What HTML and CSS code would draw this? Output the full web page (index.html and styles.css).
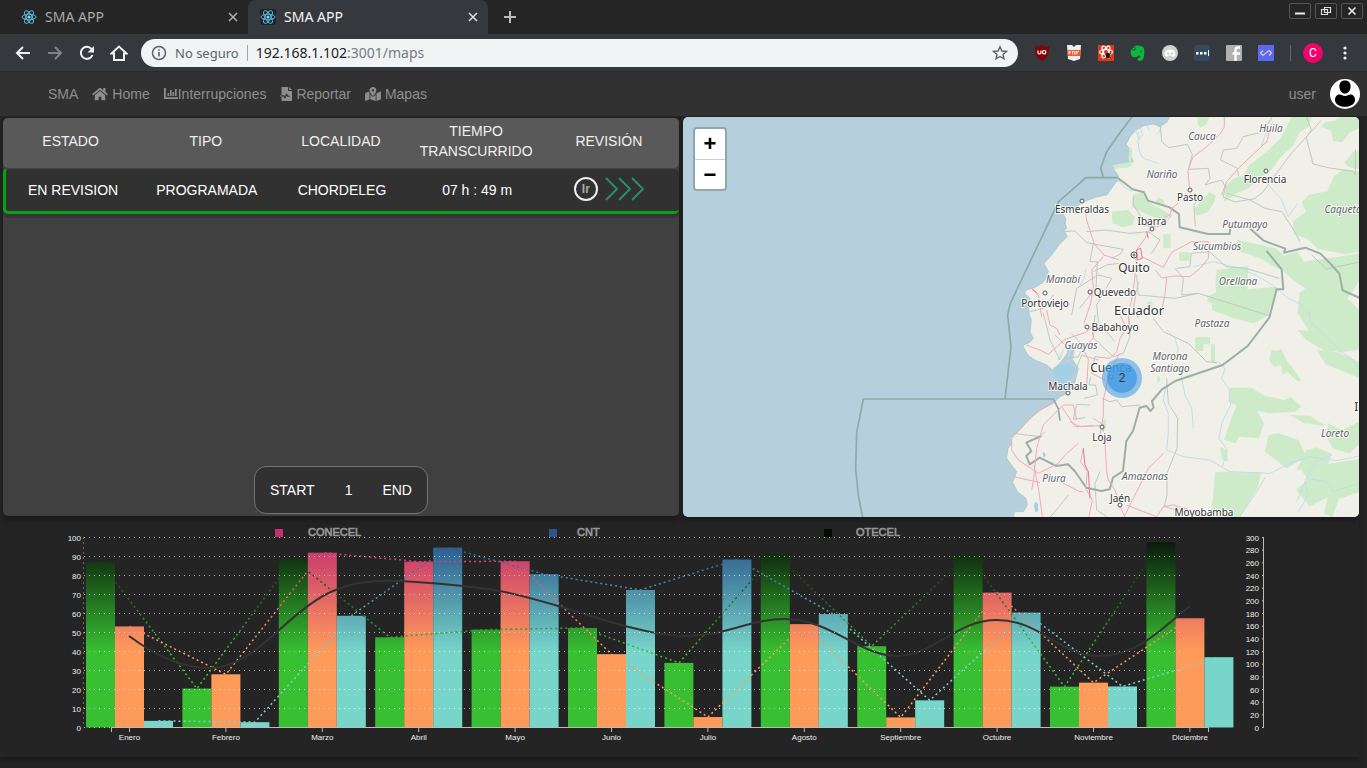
FILE: index.html
```html
<!DOCTYPE html>
<html lang="es">
<head>
<meta charset="utf-8">
<title>SMA APP</title>
<link rel="stylesheet" href="styles.css">
</head>
<body>
<svg class="defs" aria-hidden="true">
  <symbol id="react" viewBox="0 0 24 24">
    <g fill="none" stroke="#57b9d8" stroke-width="1.500">
      <ellipse cx="12" cy="12" rx="10.500" ry="4.200"/>
      <ellipse cx="12" cy="12" rx="10.500" ry="4.200" transform="rotate(60 12 12)"/>
      <ellipse cx="12" cy="12" rx="10.500" ry="4.200" transform="rotate(120 12 12)"/>
    </g>
    <circle cx="12" cy="12" r="2.400" fill="#8ad8f0"/>
  </symbol>
  <symbol id="cross" viewBox="0 0 10 10"><path d="M1 1l8 8M9 1l-8 8" fill="none" stroke="currentColor" stroke-width="1.500"/></symbol>
</svg>

<header class="browser">
  <div class="tabstrip">
    <div class="tab"><svg class="favicon"><use href="#react"/></svg><span>SMA APP</span><button class="tab-close" aria-label="Cerrar"><svg><use href="#cross"/></svg></button></div>
    <div class="tab tab-active"><svg class="favicon favicon-dark"><use href="#react"/></svg><span>SMA APP</span><button class="tab-close" aria-label="Cerrar"><svg><use href="#cross"/></svg></button></div>
    <button class="new-tab" aria-label="Nueva"><svg width="12" height="12" viewBox="0 0 12 12"><path d="M6 0v12M0 6h12" stroke="#b9bcbe" stroke-width="2"/></svg></button>
    <div class="window-buttons">
      <button aria-label="Minimizar"><svg width="20" height="14" viewBox="0 0 20 14"><path d="M5 9.500h10" stroke="#eee" stroke-width="2"/></svg></button>
      <button aria-label="Restaurar"><svg width="20" height="14" viewBox="0 0 20 14"><path d="M8.500 3.500h6v5h-6zM5.500 5.500h6v5h-6z" fill="none" stroke="#ddd" stroke-width="1.200"/></svg></button>
      <button aria-label="Cerrar"><svg width="20" height="14" viewBox="0 0 20 14"><path d="M6.500 3.500l7 7M13.500 3.500l-7 7" stroke="#eee" stroke-width="1.500"/></svg></button>
    </div>
  </div>
  <div class="toolbar">
    <button class="tool" aria-label="Atrás"><svg width="16" height="16" viewBox="0 0 16 16"><path d="M15 8H2M8 2L2 8l6 6" fill="none" stroke="#f1f1f1" stroke-width="2"/></svg></button>
    <button class="tool" aria-label="Adelante"><svg width="16" height="16" viewBox="0 0 16 16"><path d="M1 8h13M8 2l6 6-6 6" fill="none" stroke="#808386" stroke-width="2"/></svg></button>
    <button class="tool" aria-label="Recargar"><svg width="16" height="16" viewBox="0 0 16 16"><path d="M13.500 10A6 6 0 1 1 12.500 4" fill="none" stroke="#f1f1f1" stroke-width="2"/><path d="M15 1v6.500H8.500z" fill="#f1f1f1"/></svg></button>
    <button class="tool" aria-label="Inicio"><svg width="18" height="16" viewBox="0 0 18 16"><path d="M1.500 8.500L9 1.500l7.500 7H14v6.500H4V8.500z" fill="none" stroke="#f1f1f1" stroke-width="2"/></svg></button>
    <div class="address">
      <svg width="16" height="16" viewBox="0 0 16 16"><circle cx="8" cy="8" r="6.500" fill="none" stroke="#5f6368" stroke-width="1.500"/><path d="M8 7v4.500M8 4.200v1.600" stroke="#5f6368" stroke-width="1.600"/></svg>
      <span class="secure">No seguro</span>
      <span class="url"><b>192.168.1.102</b>:3001/maps</span>
      <svg class="star" width="16" height="16" viewBox="0 0 16 16"><path d="M8 1.800l1.900 4.200 4.500.4-3.400 3 1 4.500L8 11.500l-4 2.400 1-4.500-3.400-3 4.500-.4z" fill="none" stroke="#5f6368" stroke-width="1.400"/></svg>
    </div>
    <div class="extensions">
      <svg width="16" height="16" viewBox="0 0 16 16"><path d="M8 0c2 1.300 4 1.600 7 1.600C15 9 14 13 8 16 2 13 1 9 1 1.600 4 1.600 6 1.300 8 0z" fill="#800506"/><path d="M4 5.500v2.200c0 1.600 3 1.600 3 0V5.500" fill="none" stroke="#fff" stroke-width="1.200"/><circle cx="10.200" cy="7.200" r="1.700" fill="none" stroke="#fff" stroke-width="1.200"/></svg>
      <svg width="16" height="16" viewBox="0 0 16 16"><path d="M1 0h5l2 2 2-2h5l-1 14-6 2-6-2z" fill="#eee"/><path d="M1 5h14l-1 6H2z" fill="#ef5b35"/><path d="M3 9.500v-3h2M3 8h2M6.500 9.500v-3h2v3M10 9.500v-3h3M10 8h2" stroke="#fff" fill="none" stroke-width=".8"/></svg>
      <svg width="16" height="16" viewBox="0 0 16 16"><path fill="#e0391a" d="M0 0h16v16H0z"/><g fill="none" stroke="#fff" stroke-width="1.200"><ellipse cx="8" cy="7" rx="6.500" ry="2.500"/><ellipse cx="8" cy="7" rx="6.500" ry="2.500" transform="rotate(60 8 7)"/><ellipse cx="8" cy="7" rx="6.500" ry="2.500" transform="rotate(120 8 7)"/></g><ellipse cx="10" cy="10.500" rx="2.200" ry="2.800" fill="#30140e"/><path d="M7 9l6 4M13 8l-5 5" stroke="#30140e"/></svg>
      <svg width="16" height="16" viewBox="0 0 16 16"><path d="M1 5l4-4c3-1 6 0 8 1 2 2 1.500 8 .5 11-.6 2-2 3-4 3-2.500 0-2.500-3.500 0-3.500h1c.3-1.500-.8-2-2-2-1 2-5 2-6.500 1C1 10 0 8 1 5z" fill="#0bb83d"/><path d="M2 5h3V2" stroke="#35383d" fill="none" stroke-width=".8"/><circle cx="11" cy="6.500" r="1" fill="#087726"/></svg>
      <svg width="16" height="16" viewBox="0 0 16 16"><circle cx="8" cy="8" r="8" fill="#ced2ce"/><path d="M4 5.500c2.500-1.500 5.500-1.500 8 0 1 2 1.500 3.500 1.200 5.200-1 .8-2 1-2.700 1l-.6-1.200H6.100l-.6 1.200c-.7 0-1.700-.2-2.700-1C2.500 9 3 7.500 4 5.500z" fill="#fff"/><circle cx="6" cy="8.500" r="1.100" fill="#bfc3bf"/><circle cx="10" cy="8.500" r="1.100" fill="#bfc3bf"/></svg>
      <svg width="16" height="16" viewBox="0 0 16 16"><rect width="16" height="16" rx="2" fill="#34495e"/><path d="M2 7h2.500v2.500H2zM6 7h2.500v2.500H6zM10 7h2.500v2.500H10zM14 5h1v6h-1z" fill="#fff"/></svg>
      <svg width="16" height="16" viewBox="0 0 16 16"><rect width="16" height="16" rx="1" fill="#b1b1b1"/><path d="M14 2.500h-2c-2 0-2.500 1-2.500 2.500v11M6.500 8.500H14" fill="none" stroke="#fff" stroke-width="2.300"/></svg>
      <svg width="16" height="16" viewBox="0 0 16 16"><path d="M0 0h16v16H0z" fill="#5c68f2"/><path d="M5 5.500L2.500 8 5 10.500M11 5.500L13.500 8 11 10.500" fill="none" stroke="#b8dcff" stroke-width="1.300"/><path d="M5 10.500l6-5" stroke="#e7c887" stroke-width="1.300"/></svg>
    </div>
    <button class="profile">C</button>
    <button class="menu-dots" aria-label="Menú"><svg width="4" height="14" viewBox="0 0 4 14"><circle cx="2" cy="2" r="1.600"/><circle cx="2" cy="7" r="1.600"/><circle cx="2" cy="12" r="1.600"/></svg></button>
  </div>
</header>

<nav class="appnav">
  <a href="#">SMA</a>
  <a href="#"><svg width="16" height="14" viewBox="0 0 576 512"><path d="M280.370 148.260L96 300.110V464a16 16 0 0 0 16 16l112.060-.29a16 16 0 0 0 15.920-16V368a16 16 0 0 1 16-16h64a16 16 0 0 1 16 16v95.640a16 16 0 0 0 16 16.050L464 480a16 16 0 0 0 16-16V300L295.670 148.260a12.190 12.190 0 0 0-15.300 0zM571.600 251.470L488 182.560V44.050a12 12 0 0 0-12-12h-56a12 12 0 0 0-12 12v72.610L318.470 43a48 48 0 0 0-61 0L4.340 251.470a12 12 0 0 0-1.600 16.900l25.500 31A12 12 0 0 0 45.150 301l235.220-193.740a12.190 12.190 0 0 1 15.300 0L530.900 301a12 12 0 0 0 16.900-1.600l25.500-31a12 12 0 0 0-1.700-16.930z"/></svg> <span>Home</span></a>
  <a href="#" class="tight"><svg width="14" height="14" viewBox="0 0 14 14"><path d="M0 1h1.800v9.200H14V12H0zM3.500 6h1.600v3H3.500zM6 3h1.600v6H6zM8.500 5h1.600v4H8.500zM11 2h1.600v7H11z"/></svg><span>Interrupciones</span></a>
  <a href="#"><svg width="12" height="14" viewBox="0 0 12 14"><path fill-rule="evenodd" d="M1.500 0H8v4h4v9.200c0 .5-.3.800-.8.800H2.300c-.5 0-.8-.3-.8-.8V9.400h2l1 2.200h.8l1.500-3.200.6 1.300h2.400v-1H8L7 6.500h-.7l-1.500 3-.6-1.200H1.500zM9 0l3 3H9z"/><path d="M0 8.400h1.500v1H0z"/></svg> <span>Reportar</span></a>
  <a href="#"><svg width="16" height="14" viewBox="0 0 576 512"><path d="M288 0c-69.590 0-126 56.410-126 126 0 56.260 82.350 158.800 113.900 196.020 6.390 7.540 17.820 7.540 24.200 0C331.650 284.800 414 182.260 414 126 414 56.410 357.590 0 288 0zm0 168c-23.200 0-42-18.800-42-42s18.800-42 42-42 42 18.800 42 42-18.800 42-42 42zM20.120 215.950A32 32 0 0 0 0 245.660v250.320c0 11.320 11.430 19.060 21.940 14.860L160 448V214.920c-8.840-15.980-16.070-31.540-21.250-46.420zM288 359.670c-14.070 0-27.380-6.180-36.510-16.960-19.660-23.200-40.570-49.620-59.490-76.720v182l192 64V266c-18.920 27.090-39.820 53.520-59.490 76.720-9.130 10.770-22.440 16.950-36.510 16.950zm266.060-198.510L416 224v288l139.880-55.950A32 32 0 0 0 576 426.340V176.020c0-11.320-11.430-19.060-21.940-14.860z"/></svg> <span>Mapas</span></a>
  <a href="#" class="user"><span>user</span><svg width="30" height="30" viewBox="0 0 30 30"><circle cx="15" cy="15" r="15" fill="#fff"/><path d="M15 1.500c4 0 5.800 2.600 5.600 6.200-.2 3.700-2.200 6.800-5.600 6.800s-5.400-3.100-5.600-6.800C9.200 4.100 11 1.500 15 1.500z" fill="#000"/><path d="M9.500 15.500c2 0 3.200 1.500 5.500 1.500s3.500-1.500 5.500-1.500c3 0 4.500 2.500 4.500 5.500 0 3.500-4 6.800-10 6.800S5 24.500 5 21c0-3 1.500-5.500 4.500-5.500z" fill="#000"/></svg></a>
</nav>

<main class="dash">
  <section class="outages">
    <table>
      <thead><tr><th>ESTADO</th><th>TIPO</th><th>LOCALIDAD</th><th>TIEMPO TRANSCURRIDO</th><th>REVISIÓN</th></tr></thead>
      <tbody><tr><td>EN REVISION</td><td>PROGRAMADA</td><td>CHORDELEG</td><td>07 h : 49 m</td>
        <td><button class="go"><span class="go-ring">Ir</span><svg width="40" height="24" viewBox="0 0 40 24"><path d="M1 1l11 11L1 23M14 1l11 11-11 11M27 1l11 11-11 11" fill="none" stroke="#27926b" stroke-width="1.800"/></svg></button></td></tr></tbody>
    </table>
    <div class="pager"><button>START</button><button>1</button><button>END</button></div>
  </section>

  <section class="map">
    <svg class="map-art" viewBox="683 117 676 400" preserveAspectRatio="xMaxYMid slice">
      <g transform="translate(980 115) scale(.33333)" fill="none" stroke-linejoin="round">
        <path class="land" d="M572 0L560 22 540 35 520 27 490 32 465 48 450 65 438 88 455 108 452 122 460 140 445 150 430 148 398 158 412 178 420 195 408 200 395 220 380 240 350 246 305 262 285 280 262 284 245 290 258 312 255 325 260 340 252 345 262 365 238 388 215 420 192 445 205 470 198 490 190 502 165 517 138 525 134 535 150 550 145 570 148 600 154 615 150 650 160 670 152 680 128 692 145 722 165 735 200 750 218 765 240 745 262 715 270 690 282 705 278 735 295 760 285 800 268 830 240 846 215 868 180 885 140 920 118 945 90 970 96 985 84 1000 80 1030 98 1055 110 1070 98 1102 112 1130 138 1150 142 1170 130 1190 103 1190 100 1215H1145V0z"/>
        <g class="forest">
          <path d="M653 6h35l-8 20-20 12-7-10zM935 6h60l-10 30-25 15-20 38-40 40-25 35-40 28-30 28-30 12-42 28 5-50 28-22 25-5 15-30 50-40 45-42zM1035 22l30-5 15-11h57v34l-30 14-20 28-28-4-5-30-30-12zM1137 108l-18 3-25 32 12 13 31 7zM1137 170l-45-8-30 22-20 45-55 10-22 22 12 30-38 28 2 38 42 15 30 30 80 15 86-12zM1137 500V415l-60 10-105 15-20-30-40 12-25-22-115-26-12 28 80 28 72 40 30 28 60 40 85 35z"/>
          <path d="M458 240l28-8 22 30 38 22 26 15-15 12-20 2-35-14-45-22zM396 290l50-5 18 22-5 22-30 8-32-12zM525 262l10-14 15 6 5 18-22-2zM670 250l18-18 20 10-5 20-20 30-32 10-10-18zM550 358h22v42h-22zM597 412h32v25h-32zM710 465l95-12-3 70 90-8-28 85-182-38 2-20 25-8-3-30zM958 535l45-35 65 25 50 40 20 20v118l-60 10-50-35-45-35-30-50zM398 150l35-6 30-5-15 18-45 4zM448 97l8 5-2 42-8-8zM502 560h15v25h-15z"/>
          <path d="M695 560l140-5 35 15-4 30-45 25-60-15-65-25zM645 667l45-1v22h-20v20h-25zM693 688h12v55l-12-4zM952 645l50 2 35 20 32 40-30 3-60-35zM1010 705l60 5 67 30v48l-100-40zM875 705l18 2 10-5 18 35 15 20 28 38-10 5-32-30-15 10-5-30-20 5-15-20zM990 600l147 0v90l-60 8-40-25-50-28zM750 818l65 0 40 25 60 12 15-10 35 30-20 15-80 5-85-20-35-15zM770 870l60 15 22 40-15 45-60-5-10 20-35-10 20-60zM930 900l60 2 45 30-65-8zM720 995l20 10 5 35-18-5zM865 960l30-5 60 20 25 50-60 35-65-50zM1045 925l40 20 52-25v70l-30 25-50-15-18-40zM705 1072h138l-8 40-30 55-25 40h-90l10-70zM950 1065l30-60 30-8 45 20-10 30 92-15v100l-60 20-20 54-25-10 12-50-55 28-40-50 35-30-20-30z"/>
          <path d="M366 918l12-6v30l-12 8zM532 784l8 2-2 16-7-2z"/>
        </g>
        <path class="lake" d="M222 780l-2-22 25-12 25 0 15 15-12 28-20 12-5 14-12-20zM165 1160l8 4 2 25-9 2-4-18zM188 1015l5-5 4 12-7 6z"/>
        <g class="rivers">
          <path d="M415 195l22 25 20 8M480 35l8 25-12 10M465 45l15 30M500 30l8 18M545 35l-10 20M475 50q-5 60 15 80l45 15M880 20l-20 30-15 40 20-10M858 200l25 30 20 20 22 55 28-40M300 510l12-18 5-30M640 455l60-15 80 20 50 22 50 30 40 35 40 20 35 40M250 700l-8 30M285 700l-10 35M262 740l14-60M235 735l12-25"/>
          <path d="M990 585v35l50 45 50 50 30 20 17 30M715 740l20 20-10 30 22 30 5 50-25 50-10 50 25 35-15 50M560 805l-10 50 15 40 0 60-5 50 50 20 80 10 60 35 120 5 60-30 60-20 80 12 97-20M855 1088l-30 50-45 65M1055 1020l-50 20-30 60 10 40-30 50M560 645l25 25 10 35-15 35M600 760l15 80 20 40 5 60M950 1160l30-70 60 10 20 30 77-25"/>
        </g>
        <g class="admin">
          <path d="M540 20l5 60 22 18 55-10 15 30-12 45 60-3 5 30-15 20 30-10 20-4 12 20-8 30 35 15 60-10 25-20 80-110 95-105M977 0l17 45-15 22 20 80 50 12 70 10 7 10v-75M880 0l-30 50-60 15-20 35-40 5-8 30 50 25 4 25M660 240l-18 30 4 65M740 235l70 20 45 25 50 10 30 45 25 45M995 420l45 42 95-20M245 350l40-2 35 35 110 20-10 15-25 12M320 350l55-5 75 10 55-5 35 25-25 40M460 245l0 25 20 30-5 30 55 5 20-5 25-30M340 385l-10 55 22 0-4 80-50 60M470 480l5 60 110 10 70-15 215 68M590 460l40-5 3-40 55-5 50 45 60 5 100 30M585 460l25 30-5 50 50-5M340 470l40-20 35-5M275 600l15-80 65-40 40 10-45 80 5 50 50 60M520 610l30 40 75 35 55 55 32 3M475 500l-15 80 15 30M150 590l40-10 30-40M190 595l20 80 30 60M225 660l40 40-5 30 35-5 15-30-35-40M345 600l-5 70 60 55 30-10 20-50-5-60M285 770l20-50 50 15M312 850l40-10-5-30-20 0 5-25M480 870l-55 5-15-20-20 5-25-10M560 790l5 75 28 45-2 90-30 75 0 65-8 35 40 10 60 15 60 25 20 30M340 910l30 20 0 20M100 955l80 10 15-15M360 1070l-15 35 5 80 30 20M265 1140l-40 50-15 16M330 870l-40-2-10 45 35-5"/>
        </g>
        <path class="sea-border" d="M460 0l-45 60-35 50-18 50 7 25M413 188h-95l-82 72-145 305-8 35 10 95-18 157M-350 852h570l15 30 5 35"/>
        <path class="sea-border" d="M-350 852l-20 100-3 110 8 80 15 75"/>
        <path class="border" d="M413 188l45 35 34 9 12 25 65 20 28 20 2 40 60 14 25 6 65 0 2-20h55l45 40 65 24-4 12 44-10 20-5 45 18 35 35 22 25 10 50 45 20 65 30M860 408l45 55 5 60h-20l-22 85-65 85-75 57-142 48-40 25-30 35 5 20-10 10-12-15-20 5-20 70-20 30-10 90-30 20-10 35-25 5-45-10-35-50-20-20-35 5-50-25-30 20-10-25 15-15-15-25 45-20"/>
        <path class="roads" d="M733 6v30l-12 20-42 40-40 30-15 40 5 60M870 45l-10 35-80 75-40 45-15 40M595 265l-20 15-5 20-30 15-35 35-10 20-25 35-5 80-10 70-10 40 5 40M315 285l5 30 22 70 30 35 45 15M370 425l-35 40 5 50-8 50-20 60M485 425l65 32 25-45 60-32h50v50l-25 30-30 25-45-2-40 6-20-25M560 490l-5 50-10 45M155 520l20 20 10 65M140 690l50 20 15 8 50-45 60-20 20-15 5 30-30 35 15 30-5 80M200 585l10 45 20 10 10 20M420 600l20 40-20 30-10 40-20 20-45-5-10 50 40 20M420 715l-30 50-20 90 0 45-10 60 15 20 5 90 5 25 20 30 20 60 20 45M260 840l15-40M250 870l-60 60-20 70-10 100-5 25M250 870l30 0 10 45M270 920l30 15 60-3M245 875l40 60 55-3M220 860l-60 40-65 70 0 35 20 30 60 40 60-30 25-30 35-30M100 1085l80 18M162 1050l15 80 10 75M310 1000l-8 40 20 30-5 50 20 35-10 50M240 1100l60 30 10 0M550 1015l-45 45-25 50-20 40-30 60M440 1170l50 20 40 15 20-30 30-5 50 15 60 20"/>
        <path class="redroads" d="M470 405l12-5 5 30-15 5zM155 520l18 16M310 1000l5 50 10 20 5 80M500 350l5 20"/>
      </g>
      <g class="towns">
        <circle cx="1082" cy="201" r="2"/><circle cx="1190" cy="190" r="2"/><circle cx="1266" cy="171" r="2"/><circle cx="1152" cy="229" r="2"/><circle cx="1045" cy="293" r="2"/><circle cx="1090" cy="292" r="2"/><circle cx="1087" cy="327" r="2"/><circle cx="1068" cy="393" r="2"/><circle cx="1102" cy="427" r="2"/><circle cx="1120" cy="505" r="2"/><circle cx="1134" cy="255" r="3"/><circle cx="1134" cy="255" r="1"/><circle cx="1111" cy="377" r="2"/>
      </g>
      <g class="region">
        <text x="1202" y="140">Cauca</text><text x="1271" y="132">Huila</text><text x="1162" y="178">Nariño</text><text x="1343" y="213">Caquetá</text><text x="1245" y="228">Putumayo</text><text x="1217" y="250">Sucumbios</text><text x="1063" y="283">Manabí</text><text x="1238" y="285">Orellana</text><text x="1212" y="327">Pastaza</text><text x="1081" y="349">Guayas</text><text x="1170" y="360">Morona</text><text x="1170" y="372">Santiago</text><text x="1335" y="437">Loreto</text><text x="1054" y="482">Piura</text><text x="1145" y="480">Amazonas</text>
      </g>
      <g class="city">
        <text x="1265" y="183">Florencia</text><text x="1190" y="201">Pasto</text><text x="1082" y="213">Esmeraldas</text><text x="1152" y="225">Ibarra</text><text x="1115" y="296">Quevedo</text><text x="1045" y="307">Portoviejo</text><text x="1115" y="331">Babahoyo</text><text x="1068" y="390">Machala</text><text x="1102" y="441">Loja</text><text x="1120" y="502">Jaén</text><text x="1204" y="516">Moyobamba</text>
        <text class="big" x="1134" y="272">Quito</text><text class="big" x="1111" y="372">Cuenca</text><text class="big country" x="1139" y="315">Ecuador</text><text class="big" x="1374" y="411">Iquitos</text>
      </g>
      <circle cx="1122" cy="378" r="20" fill="#3f99e3" fill-opacity=".55"/><circle cx="1122" cy="378" r="15" fill="#3f99e3" fill-opacity=".75"/>
      <text class="cluster" x="1122" y="382">2</text>
    </svg>
    <div class="zoom"><button aria-label="Acercar">+</button><button aria-label="Alejar">−</button></div>
  </section>
</main>

<section class="chart"><svg id="chart" viewBox="0 517 1367 240" role="img" aria-label="CONECEL, CNT, OTECEL"></svg></section>
<script src="chart.js"></script>
</body>
</html>
```
FILE: styles.css
```css
* { box-sizing: border-box; }
body { margin: 0; min-height: 100vh; background: #242424; font: 14px/20px "Liberation Sans", Arial, sans-serif; color: #fff; overflow-x: hidden; }
button { font: inherit; color: inherit; background: none; border: 0; padding: 0; cursor: pointer; }
a { color: inherit; text-decoration: none; }
svg { flex: none; }
.defs { position: absolute; width: 0; height: 0; }

/* Browser frame */
.browser { font-family: "Noto Sans", sans-serif; }
.tabstrip { display: flex; height: 34px; padding-left: 9px; background: #252525; }
.tab { display: flex; align-items: center; gap: 8px; width: 239px; padding: 0 8px 0 12px; color: #a8aaac; }
.tab-active { width: 240px; background: #35383d; color: #f5f5f5; border-radius: 8px 8px 0 0; }
.favicon { width: 16px; height: 16px; }
.favicon-dark { background: #202428; border-radius: 2px; }
.tab-close { display: flex; margin-left: auto; padding: 2px; color: #b0b2b4; }
.tab-close svg { width: 10px; height: 10px; }
.tab-active .tab-close { color: #e0e0e0; }
.new-tab { display: flex; align-items: center; padding: 0 16px; }
.window-buttons { display: flex; gap: 4px; margin: 3px 4px 0 auto; align-items: flex-start; }
.window-buttons button { display: flex; border: 1px solid #555; border-radius: 2px; }
.toolbar { display: flex; align-items: center; height: 37px; padding: 0 17px 0 7px; background: #35383d; }
.tool { display: flex; justify-content: center; width: 32px; }
.address { display: flex; align-items: center; flex: 1; height: 28px; margin-left: 6px; padding: 0 10px; border-radius: 14px; background: #f1f3f5; color: #5f6368; }
.secure { padding: 0 8px; border-right: 1px solid #a5a8ab; font-size: 13px; line-height: 16px; }
.url { padding-left: 8px; color: #777b7f; }
.url b { font-weight: 400; color: #222; }
.star { margin-left: auto; }
.extensions { display: flex; gap: 16px; margin-left: 16px; padding-right: 16px; border-right: 1px solid #666; }
.profile { width: 20px; height: 20px; margin-left: 12px; border-radius: 50%; background: #f3026b; font: 12px/20px Roboto, sans-serif; }
.menu-dots { display: flex; margin-left: 20px; fill: #eee; margin-right: 3px; }

/* Application bar */
.appnav { display: flex; align-items: center; gap: 14px; height: 46px; padding: 0 7px 0 48px; border-top: 1px solid #2b2b2b; border-bottom: 1px solid #242424; background: #313131; color: #8e8e8e; }
.appnav a { display: flex; align-items: center; gap: 4px; }
.appnav a svg { fill: #8e8e8e; }
.appnav .tight { gap: 0; }
.appnav .user { gap: 14px; margin-left: auto; }

/* Table and map */
.dash { display: grid; grid-template-columns: 1fr 1fr; gap: 4px; padding: 0 8px 0 3px; min-height: 400px; }
.outages { display: flex; flex-direction: column; align-items: center; margin-top: 1px; margin-bottom: 1px; padding-bottom: 2px; border-radius: 5px; background: #404040; box-shadow: 0 5px 5px #1b1b1b; }
table { width: 100%; table-layout: fixed; border-collapse: separate; border-spacing: 0; text-align: center; }
thead tr { background: #595959; color: #f0f0f0; }
th { width: 20%; height: 50px; padding: 3px 10px 7px; font-weight: 400; }
th:last-child { width: auto; padding-right: 15px; }
th:first-child, td:first-child { border-radius: 5px 0 0 5px; }
th:last-child, td:last-child { border-radius: 0 5px 5px 0; }
td { height: 46px; padding: 0 0 0 2px; background: #313131; border-top: 1px solid #444; border-bottom: 3px solid #08a016; box-shadow: 0 4px 0 #363636; }
td:first-child { border-left: 3px solid #08a016; }
td:last-child { padding: 0 4px 2px 0; }
.go { display: inline-flex; align-items: center; gap: 7px; vertical-align: middle; }
.go-ring { width: 24px; height: 24px; border: 2px solid #eee; border-radius: 50%; color: #aaa; font: bold 12px/20px "Liberation Sans", sans-serif; }
.pager { display: flex; gap: 30px; margin-top: auto; padding: 13px 15px; border: 1px solid #747474; border-radius: 12px; background: #313131; }
.map { position: relative; overflow: hidden; border-radius: 5px; background: #b5d0dc; box-shadow: 0 4px 5px #1b1b1b; }
.map-art { display: block; width: 100%; height: 100%; }
.land { fill: #f0efe8; stroke: #a9c0c4; stroke-width: 2; }
.forest { fill: #cdebc9; }
.lake { fill: #a5cfe3; }
.rivers { stroke: #c3dde8; stroke-width: 3; }
.admin { stroke: #bdc9c2; stroke-width: 3; }
.sea-border { stroke: #8caaa7; stroke-width: 5; }
.border { stroke: #9cafa6; stroke-width: 6; }
.roads { stroke: #f2a9bc; stroke-width: 3; }
.redroads { stroke: #e97198; stroke-width: 3; }
.towns { fill: #fff; stroke: #555; stroke-width: 1; }
.map text { text-anchor: middle; font-family: "Noto Sans", sans-serif; font-size: 10px; fill: #333; stroke: #fff; stroke-opacity: .8; stroke-width: 2px; paint-order: stroke; }
.map .region text { font-style: italic; fill: #606468; }
.map .big { font-size: 12px; }
.map .country { font-size: 13px; }
.map .cluster { font-family: "Liberation Sans", sans-serif; font-size: 12px; stroke: none; }
.zoom { position: absolute; top: 10px; left: 10px; border: 2px solid #91a7b0; border-radius: 4px; background: #fff; }
.zoom button { display: block; width: 30px; height: 30px; color: #000; font: bold 22px/30px "Liberation Sans", sans-serif; }
.zoom button + button { border-top: 1px solid #ccc; }

/* Chart */
.chart { box-shadow: 0 4px 4px #1c1c1c; margin-right: 8px; margin-bottom: 11px; }
.chart svg { display: block; width: calc(100% + 8px); height: auto; }
.chart text { fill: #eee; font: 8px "Liberation Sans", sans-serif; }
.chart .end { text-anchor: end; }
.chart .mid { text-anchor: middle; }
.chart .legend { fill: #999; stroke: #999; stroke-width: .6px; font-size: 11px; }
.grid { stroke: #fff; stroke-opacity: .65; stroke-width: 1; stroke-dasharray: 1 4; }
.axis { stroke: #bbb; fill: none; }
.trend { stroke: #333; stroke-width: 2; fill: none; }
.series { fill: none; stroke-dasharray: 2 3; stroke-width: 1.500; }
```
FILE: chart.js
```js
const months = ["Enero", "Febrero", "Marzo", "Abril", "Mayo", "Junio", "Julio", "Agosto", "Septiembre", "Octubre", "Noviembre", "Diciembre"];
const base = 727.5;
const unit = 1.9;
const step = 96.4;
const series = [
  { id: "otecel", from: "#0a140a", to: "#38c032", x: 86, values: [87, 20.5, 88.5, 47.5, 51.5, 52.4, 34, 91.5, 42.8, 91, 21.5, 97.5] },
  { id: "conecel", from: "#c2306f", to: "#ff9b5a", x: 115, values: [53.2, 28, 92, 87.3, 87.5, 38.6, 5.5, 54.4, 5.3, 71, 23.6, 57.5] },
  { id: "cnt", from: "#28548a", to: "#78d5ca", x: 144, values: [3.5, 2.8, 58.8, 94.7, 80.7, 72.4, 88.4, 59.7, 14.3, 60.5, 21.6, 37] }
];
const y = v => base - v * unit;
let out = "<defs>" + series.map(s => `<linearGradient id="${s.id}" gradientUnits="userSpaceOnUse" x1="0" y1="538" x2="0" y2="652"><stop offset="0" stop-color="${s.from}"/><stop offset="1" stop-color="${s.to}"/></linearGradient>`).join("") + "</defs>";

[["CONECEL", 275, 308, "#c2306f"], ["CNT", 549, 577, "#2c568a"], ["OTECEL", 824, 856, "#050a05"]].forEach(([name, bx, tx, color]) => {
  out += `<rect x="${bx}" y="529" width="8" height="8" fill="${color}"/><text class="legend" x="${tx}" y="536">${name}</text>`;
});
series.forEach(s => s.values.forEach((v, i) => {
  out += `<rect x="${s.x + i * step}" y="${y(v)}" width="29" height="${v * unit}" fill="url(#${s.id})"/>`;
}));
series.forEach(s => {
  out += `<polyline class="series" stroke="url(#${s.id})" points="${s.values.map((v, i) => `${s.x + 14.5 + i * step},${y(v)}`).join(" ")}"/>`;
});
out += '<path class="trend" d="M129 636C155 655 180 668 210 668C236 668 258 649 278 631C298 613 318 596 338 589C355 582 375 580 398 581C440 583 470 586 500 591C550 601 590 617 625 626C645 631 665 636 687 636C725 636 750 619 785 619C830 619 860 656 897 656C935 656 955 620 997 620C1040 620 1060 656 1098 656C1140 656 1165 625 1190 606"/>';
for (let v = 0; v <= 100; v += 10) {
  out += `<path class="grid" d="M84 ${y(v)}H1180"/><text class="end" x="81" y="${y(v) + 3}">${v}</text>`;
}
out += '<path class="grid" d="M83.5 537.5V727.5"/><path class="axis" d="M111.5 732V727.5H1208.500V732M1263.500 537.5V727.5"/>';
months.forEach((m, i) => {
  const x = 129.5 + i * step;
  out += `<path class="axis" d="M${x} 727.5V732"/><text class="mid" x="${x}" y="740">${m}</text>`;
});
for (let v = 0; v <= 300; v += 20) {
  const ty = base - v * 190 / 300;
  out += `<path class="axis" d="M1262 ${ty}H1264"/><text class="end" x="1259" y="${ty + 3}">${v}</text>`;
}
document.getElementById("chart").innerHTML = out;
```
